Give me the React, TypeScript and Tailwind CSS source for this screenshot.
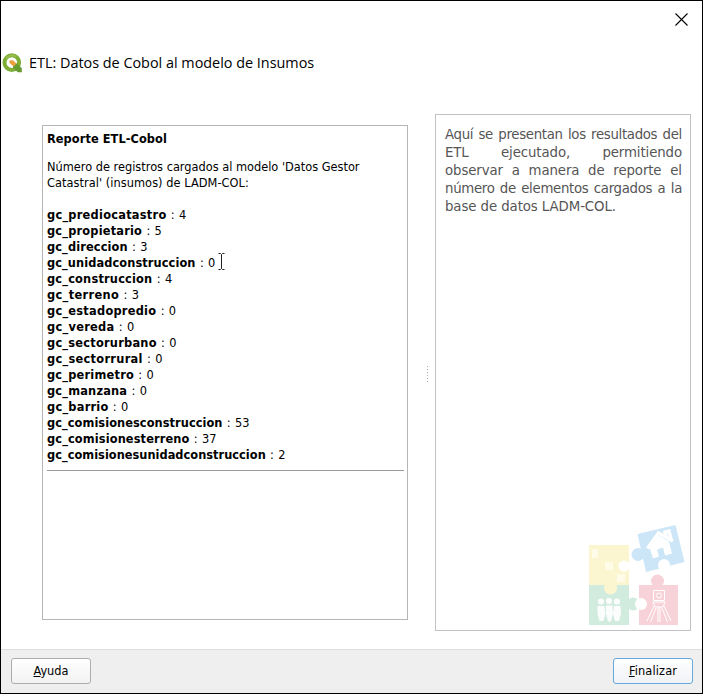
const rows: [string, string, string][] = [
  ["gc_prediocatastro", "4", "tracking-[0.26px]"],
  ["gc_propietario", "5", "tracking-[0.2px]"],
  ["gc_direccion", "3", "tracking-[0.12px]"],
  ["gc_unidadconstruccion", "0", "tracking-[0.1px]"],
  ["gc_construccion", "4", "tracking-[0.2px]"],
  ["gc_terreno", "3", "tracking-[0.36px]"],
  ["gc_estadopredio", "0", "tracking-[0.26px]"],
  ["gc_vereda", "0", "tracking-[0.3px]"],
  ["gc_sectorurbano", "0", "tracking-[0.24px]"],
  ["gc_sectorrural", "0", "tracking-[0.3px]"],
  ["gc_perimetro", "0", "tracking-[0.22px]"],
  ["gc_manzana", "0", "tracking-[0.2px]"],
  ["gc_barrio", "0", "tracking-[0.25px]"],
  ["gc_comisionesconstruccion", "53", "tracking-[0.07px]"],
  ["gc_comisionesterreno", "37", "tracking-[0.13px]"],
  ["gc_comisionesunidadconstruccion", "2", "tracking-[0.03px]"],
];

const helpLines: [string, string][] = [
  ["Aquí se presentan los resultados del", "tracking-[-0.32px]"],
  ["ETL ejecutado, permitiendo", "tracking-[-0.1px]"],
  ["observar a manera de reporte el", "tracking-[-0.1px]"],
  ["número de elementos cargados a la", "tracking-[-0.3px]"],
];

const QgisLogo = () => (
  <svg className="h-[21px] w-[21px]" viewBox="0 0 21 21">
    <circle cx="9.8" cy="9.6" r="7.3" fill="none" stroke="#7eae35" strokeWidth="4" />
    <path d="M3.800 5.500A7.300 7.300 0 0 1 14 3.700" fill="none" stroke="#98bd4c" strokeWidth="2" />
    <path d="M11 10.500h3.800l5 4.800v4h-4.100L11 14.500z" fill="#659b31" />
    <path d="M7.500 7.200h3.500l3.500 3.400-2.800 2.900L7.500 10z" fill="#e8a23d" />
  </svg>
);

const Puzzle = () => (
  <svg className="h-[102px] w-[98px]" viewBox="0 0 98 102">
    <path d="M2 22h40v40H2z" fill="#fcf6d0" />
    <path d="M2 62h40v40H2z" fill="#d2ebdf" />
    <circle cx="46" cy="81" r="6.5" fill="#d2ebdf" />
    <circle cx="23.5" cy="65" r="6.5" fill="#fcf6d0" />
    <circle cx="37" cy="43" r="5.5" fill="#fff" />
    <path d="M52 62h39v40H52z" fill="#f8d2d9" />
    <circle cx="70.5" cy="58" r="6.5" fill="#f8d2d9" />
    <circle cx="54" cy="81" r="6" fill="#fff" />
    <path d="M5 26h6v9H5zM18 39h8v8h-8zM30 51h8v8h-8z" fill="#fffdf0" opacity=".75" />
    <path d="M50.500 11l38-9 9 37-38.500 10z" fill="#cce6f7" />
    <circle cx="51" cy="31.500" r="6.500" fill="#cce6f7" />
    <circle cx="77" cy="42" r="6" fill="#fff" />
    <path d="M62.500 24.500l3.500 11 6-2-2-7 6-2 2 8 7-2-3-12-10-6z" fill="#fff" />
    <path d="M60.500 25.500L71.500 10 86 18M79 13l-1-4 4-1 2 8" fill="none" stroke="#fff" strokeWidth="3.500" />
    <g fill="#fff" opacity=".9">
      <circle cx="14" cy="78.500" r="3.100" /><circle cx="22" cy="78" r="3.100" /><circle cx="30" cy="78.500" r="3.100" />
      <path d="M10.500 83h7l1 8-2 7h-4l-2-7zM19 82.500h6.500l.5 8-2 8h-3l-2-8zM27 83h6.500l.5 8-2 7h-4l-2-7z" />
    </g>
    <g fill="none" stroke="#fff" strokeWidth="1">
      <path d="M66.500 67.500h11v10h-11zM66 79h12l-2 5h-8zM67 83l-7 15M69 85l-5.500 14M77 83l7 15M75 85l5.500 14M71 84v15M73 84v15" />
      <circle cx="72" cy="72.500" r="2.500" />
    </g>
  </svg>
);

export default function App() {
  return (
    <div className="flex h-[694px] w-[703px] flex-col overflow-hidden border border-black bg-white font-['DejaVu_Sans_Condensed','DejaVu_Sans',sans-serif] text-[12.65px] text-black [font-stretch:condensed]">
      <div className="flex h-9 justify-end pt-3 pr-[14px]">
        <svg className="h-[13px] w-[13px]" viewBox="0 0 13 13"><path d="M.5.5l12 12M12.500.5l-12 12" stroke="#000" strokeWidth="1.100" /></svg>
      </div>
      <header className="flex h-[52px] items-center gap-[6px] pl-px font-['Open_Sans',sans-serif] text-[14.4px] leading-[20px] [font-stretch:normal]">
        <QgisLogo />
        <h1 className="whitespace-nowrap">ETL: Datos de Cobol al modelo de Insumos</h1>
      </header>
      <main className="flex h-[560px] pt-[25px] pl-[41px]">
        <section className="mt-[11px] h-[495px] w-[366px] border border-[#b5b5b8] pr-[3px] pl-1">
          <h2 className="pt-[5px] leading-4 font-bold tracking-[0.07px]">Reporte ETL-Cobol</h2>
          <p className="mt-3 leading-4 whitespace-nowrap">Número de registros cargados al modelo 'Datos Gestor<br /><span className="tracking-[0.05px]">Catastral' (insumos) de LADM-COL:</span></p>
          <ul className="relative mt-4">
            {rows.map(([name, value, tracking]) => (
              <li key={name} className="h-4 leading-4 whitespace-nowrap [word-spacing:0.7px]">
                <b className={tracking}>{name}</b> : {value}
              </li>
            ))}
            <svg className="absolute top-[46px] left-[171px] h-[17px] w-[8px]" viewBox="0 0 8 17"><path d="M.5.5h2l1 1 1-1h2M3.500 1.500v14M.5 16.500h2l1-1 1 1h2" fill="none" stroke="#222" /></svg>
          </ul>
          <hr className="mt-[7px] border-[#999]" />
        </section>
        <div className="mt-[252px] flex w-[27px] flex-col items-end gap-[2px] pr-[7px]">
          {[0, 1, 2, 3, 4, 5].map((dot) => <i key={dot} className="h-px w-px bg-[#aaa]" />)}
        </div>
        <aside className="flex h-[517px] w-[256px] flex-col justify-between border border-[#c2c2c4] pt-[10px] pr-[8px] pb-[5px] pl-[9px] text-[14.8px] leading-[18px] text-[#555]">
          <p>
            {helpLines.map(([line, tracking]) => (
              <span key={line} className={`flex justify-between whitespace-nowrap ${tracking}`}>
                {line.split(" ").map((word, i) => <span key={i}>{word} </span>)}
              </span>
            ))}
            <span className="tracking-[-0.08px]">base de datos LADM-COL.</span>
          </p>
          <div className="-mr-[3px] self-end"><Puzzle /></div>
        </aside>
      </main>
      <footer className="flex flex-1 items-start justify-between border-t border-[#dedede] bg-[#efefef] px-[10px] pt-[8px]">
        <button className="h-[26px] w-[80px] rounded-[3px] border border-[#adadad] bg-linear-to-b from-white to-[#f2f2f2]"><u>A</u>yuda</button>
        <button className="-mr-[1px] h-[26px] w-[80px] rounded-[3px] border border-[#67a9dc] bg-linear-to-b from-white to-[#f0f2f7] tracking-[0.15px]"><u>F</u>inalizar</button>
      </footer>
    </div>
  );
}
